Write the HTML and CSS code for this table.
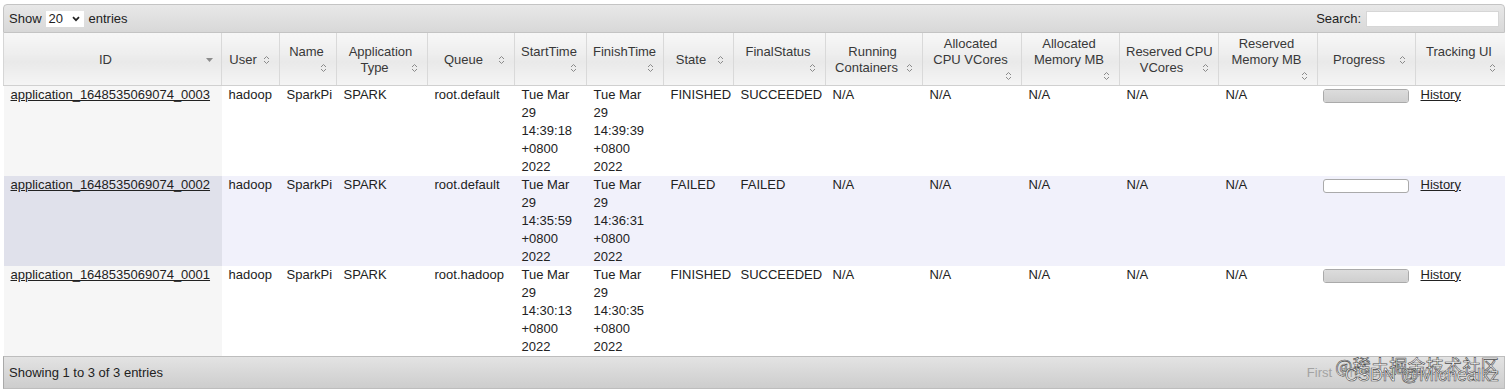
FILE: index.html
```html
<!DOCTYPE html>
<html lang="en">
<head>
<meta charset="utf-8">
<title>Applications</title>
<link rel="stylesheet" href="styles.css">
</head>
<body>
<div class="wrap">
  <div class="toolbar top">
    <div class="length">Show <span class="sel"><span>20</span><svg width="8" height="6" viewBox="0 0 8 6"><path d="M1 1.2L4 4.2L7 1.2" fill="none" stroke="#222" stroke-width="1.7"/></svg></span> entries</div>
    <div class="search">Search: <span class="inp"></span></div>
  </div>
  <table class="apps">
    <colgroup>
      <col class="c-id"><col class="c-user"><col class="c-name"><col class="c-type"><col class="c-queue">
      <col class="c-start"><col class="c-finish"><col class="c-state"><col class="c-final"><col class="c-run">
      <col class="c-acpu"><col class="c-amem"><col class="c-rcpu"><col class="c-rmem"><col class="c-prog"><col class="c-track">
    </colgroup>
    <thead>
      <tr>
        <th class="first"><i class="si"><svg width="7" height="4" viewBox="0 0 7 4"><path d="M0 0H7L3.5 4Z" fill="#8c8c8c"/></svg></i>ID</th>
        <th><i class="si"><svg width="7" height="10" viewBox="0 0 7 10"><path d="M1 4L3.5 1.5L6 4M1 6L3.5 8.5L6 6" fill="none" stroke="#8a8a8a"/></svg></i>User</th>
        <th>Name<br><i class="si"><svg width="7" height="10" viewBox="0 0 7 10"><path d="M1 4L3.5 1.5L6 4M1 6L3.5 8.5L6 6" fill="none" stroke="#8a8a8a"/></svg></i></th>
        <th>Application<br><i class="si"><svg width="7" height="10" viewBox="0 0 7 10"><path d="M1 4L3.5 1.5L6 4M1 6L3.5 8.5L6 6" fill="none" stroke="#8a8a8a"/></svg></i>Type</th>
        <th><i class="si"><svg width="7" height="10" viewBox="0 0 7 10"><path d="M1 4L3.5 1.5L6 4M1 6L3.5 8.5L6 6" fill="none" stroke="#8a8a8a"/></svg></i>Queue</th>
        <th>StartTime<br><i class="si"><svg width="7" height="10" viewBox="0 0 7 10"><path d="M1 4L3.5 1.5L6 4M1 6L3.5 8.5L6 6" fill="none" stroke="#8a8a8a"/></svg></i></th>
        <th>FinishTime<br><i class="si"><svg width="7" height="10" viewBox="0 0 7 10"><path d="M1 4L3.5 1.5L6 4M1 6L3.5 8.5L6 6" fill="none" stroke="#8a8a8a"/></svg></i></th>
        <th><i class="si"><svg width="7" height="10" viewBox="0 0 7 10"><path d="M1 4L3.5 1.5L6 4M1 6L3.5 8.5L6 6" fill="none" stroke="#8a8a8a"/></svg></i>State</th>
        <th>FinalStatus<br><i class="si"><svg width="7" height="10" viewBox="0 0 7 10"><path d="M1 4L3.5 1.5L6 4M1 6L3.5 8.5L6 6" fill="none" stroke="#8a8a8a"/></svg></i></th>
        <th>Running<br><i class="si"><svg width="7" height="10" viewBox="0 0 7 10"><path d="M1 4L3.5 1.5L6 4M1 6L3.5 8.5L6 6" fill="none" stroke="#8a8a8a"/></svg></i>Containers</th>
        <th>Allocated<br>CPU VCores<br><i class="si"><svg width="7" height="10" viewBox="0 0 7 10"><path d="M1 4L3.5 1.5L6 4M1 6L3.5 8.5L6 6" fill="none" stroke="#8a8a8a"/></svg></i></th>
        <th>Allocated<br>Memory MB<br><i class="si"><svg width="7" height="10" viewBox="0 0 7 10"><path d="M1 4L3.5 1.5L6 4M1 6L3.5 8.5L6 6" fill="none" stroke="#8a8a8a"/></svg></i></th>
        <th>Reserved CPU<br><i class="si"><svg width="7" height="10" viewBox="0 0 7 10"><path d="M1 4L3.5 1.5L6 4M1 6L3.5 8.5L6 6" fill="none" stroke="#8a8a8a"/></svg></i>VCores</th>
        <th>Reserved<br>Memory MB<br><i class="si"><svg width="7" height="10" viewBox="0 0 7 10"><path d="M1 4L3.5 1.5L6 4M1 6L3.5 8.5L6 6" fill="none" stroke="#8a8a8a"/></svg></i></th>
        <th><i class="si"><svg width="7" height="10" viewBox="0 0 7 10"><path d="M1 4L3.5 1.5L6 4M1 6L3.5 8.5L6 6" fill="none" stroke="#8a8a8a"/></svg></i>Progress</th>
        <th>Tracking UI<br><i class="si"><svg width="7" height="10" viewBox="0 0 7 10"><path d="M1 4L3.5 1.5L6 4M1 6L3.5 8.5L6 6" fill="none" stroke="#8a8a8a"/></svg></i></th>
      </tr>
    </thead>
    <tbody>
      <tr class="odd">
        <td class="sorted"><a href="#">application_1648535069074_0003</a></td>
        <td>hadoop</td><td>SparkPi</td><td>SPARK</td><td>root.default</td>
        <td class="dt">Tue Mar 29 14:39:18 +0800 2022</td>
        <td class="dt">Tue Mar 29 14:39:39 +0800 2022</td>
        <td>FINISHED</td><td>SUCCEEDED</td><td>N/A</td><td>N/A</td><td>N/A</td><td>N/A</td><td>N/A</td>
        <td class="pc"><div class="bar"><div class="fill" style="width:100%"></div></div></td>
        <td class="tr"><a href="#">History</a></td>
      </tr>
      <tr class="even">
        <td class="sorted"><a href="#">application_1648535069074_0002</a></td>
        <td>hadoop</td><td>SparkPi</td><td>SPARK</td><td>root.default</td>
        <td class="dt">Tue Mar 29 14:35:59 +0800 2022</td>
        <td class="dt">Tue Mar 29 14:36:31 +0800 2022</td>
        <td>FAILED</td><td>FAILED</td><td>N/A</td><td>N/A</td><td>N/A</td><td>N/A</td><td>N/A</td>
        <td class="pc"><div class="bar"><div class="fill" style="width:0%"></div></div></td>
        <td class="tr"><a href="#">History</a></td>
      </tr>
      <tr class="odd">
        <td class="sorted"><a href="#">application_1648535069074_0001</a></td>
        <td>hadoop</td><td>SparkPi</td><td>SPARK</td><td>root.hadoop</td>
        <td class="dt">Tue Mar 29 14:30:13 +0800 2022</td>
        <td class="dt">Tue Mar 29 14:30:35 +0800 2022</td>
        <td>FINISHED</td><td>SUCCEEDED</td><td>N/A</td><td>N/A</td><td>N/A</td><td>N/A</td><td>N/A</td>
        <td class="pc"><div class="bar"><div class="fill" style="width:100%"></div></div></td>
        <td class="tr"><a href="#">History</a></td>
      </tr>
    </tbody>
  </table>
  <div class="toolbar bottom">
    <div class="info">Showing 1 to 3 of 3 entries</div>
    <div class="pager"><span>First</span><span>Previous</span><span>Next</span><span>Last</span></div>
    <div class="wm"><span class="wm1">@稀土掘金技术社区</span><span class="wm2">CSDN @Michealkz</span></div>
  </div>
</div>
</body>
</html>
```
FILE: styles.css
```css
* { box-sizing: border-box; }

body {
  margin: 4px 7px 0 3px;
  font-family: "Liberation Sans", Arial, Helvetica, sans-serif;
  font-size: 13px;
  color: #222;
  background: #fff;
}

.wrap { width: 1502px; }

.toolbar {
  display: flex;
  align-items: center;
  justify-content: space-between;
}

.toolbar.top {
  height: 29px;
  padding: 0 5px;
  border: 1px solid #c4c4c4;
  border-radius: 4px 4px 0 0;
  background: linear-gradient(#e8e8e8, #d8d8d8);
  color: #222;
}

.length, .search { display: flex; align-items: center; }

.sel {
  display: inline-flex;
  align-items: center;
  justify-content: space-between;
  width: 38px;
  height: 16px;
  margin: 0 5px 0 4px;
  padding: 0 4px 0 3px;
  background: #fff;
}

.inp {
  display: inline-block;
  width: 133px;
  height: 16px;
  margin-left: 5px;
  background: #fff;
  border: 1px solid #d6d6d6;
}

table.apps {
  width: 1502px;
  table-layout: fixed;
  border-collapse: collapse;
}

.c-id { width: 218px; }
.c-user { width: 58px; }
.c-name { width: 57px; }
.c-type { width: 91px; }
.c-queue { width: 87px; }
.c-start { width: 72px; }
.c-finish { width: 77px; }
.c-state { width: 70px; }
.c-final { width: 92px; }
.c-run { width: 97px; }
.c-acpu { width: 99px; }
.c-amem { width: 98px; }
.c-rcpu { width: 99px; }
.c-rmem { width: 99px; }
.c-prog { width: 98px; }
.c-track { width: 90px; }

th {
  height: 52px;
  padding: 3px 9px 0 6px;
  font-weight: normal;
  color: #383838;
  line-height: 16px;
  text-align: center;
  vertical-align: middle;
  white-space: nowrap;
  background: linear-gradient(#f7f7f7 0%, #eeeeee 40%, #e9e9e9 55%, #f4f4f4 100%);
  border-right: 1px solid #d9d9d9;
  border-bottom: 1px solid #d0d0d0;
}

th.first { border-left: 1px solid #d6d6d6; padding-right: 8px; }

.si {
  float: right;
  display: flex;
  align-items: center;
  justify-content: center;
  width: 8px;
  height: 16px;
  margin-left: 4px;
}

td {
  padding: 0 7px;
  line-height: 18px;
  vertical-align: top;
  color: #222;
}

td.dt { padding-right: 14px; }
td.pc { padding-left: 5px; }
td.tr { padding-left: 5px; }

tr.odd td { background: #fff; }
tr.odd td.sorted { background: #f6f6f6; }
tr.even td { background: #f1f1fb; }
tr.even td.sorted { background: #e0e1eb; }

td a { color: #222; text-decoration: underline; }

.bar {
  width: 86px;
  height: 14px;
  margin-top: 3px;
  border: 1px solid #aaaaaa;
  border-radius: 3px;
  background: #fff;
  overflow: hidden;
}

.fill {
  height: 100%;
  background: linear-gradient(#dcdcdc, #cfcfcf);
}

.toolbar.bottom {
  position: relative;
  height: 33px;
  padding: 0 5px;
  border: 1px solid #bdbdbd;
  border-left-color: #a9a9a9;
  background: linear-gradient(#e3e3e3, #cdcdcd);
  color: #222;
}

.pager {
  display: flex;
  gap: 9px;
  padding-right: 38px;
  color: #a3a3a3;
}

.wm {
  position: absolute;
  right: 5px;
  top: 0;
  width: 175px;
  height: 31px;
  pointer-events: none;
}

.wm1, .wm2 {
  position: absolute;
  right: 0;
  color: #ffffff;
  -webkit-text-stroke: 0.6px #4a4a4a;
  white-space: nowrap;
}

.wm1 {
  top: -5px;
  font-family: "Noto Sans CJK SC", "Liberation Sans", sans-serif;
  font-size: 18px;
  letter-spacing: 0.3px;
}

.wm2 {
  top: 8px;
  font-family: "Liberation Sans", Arial, sans-serif;
  font-size: 18px;
}
```
